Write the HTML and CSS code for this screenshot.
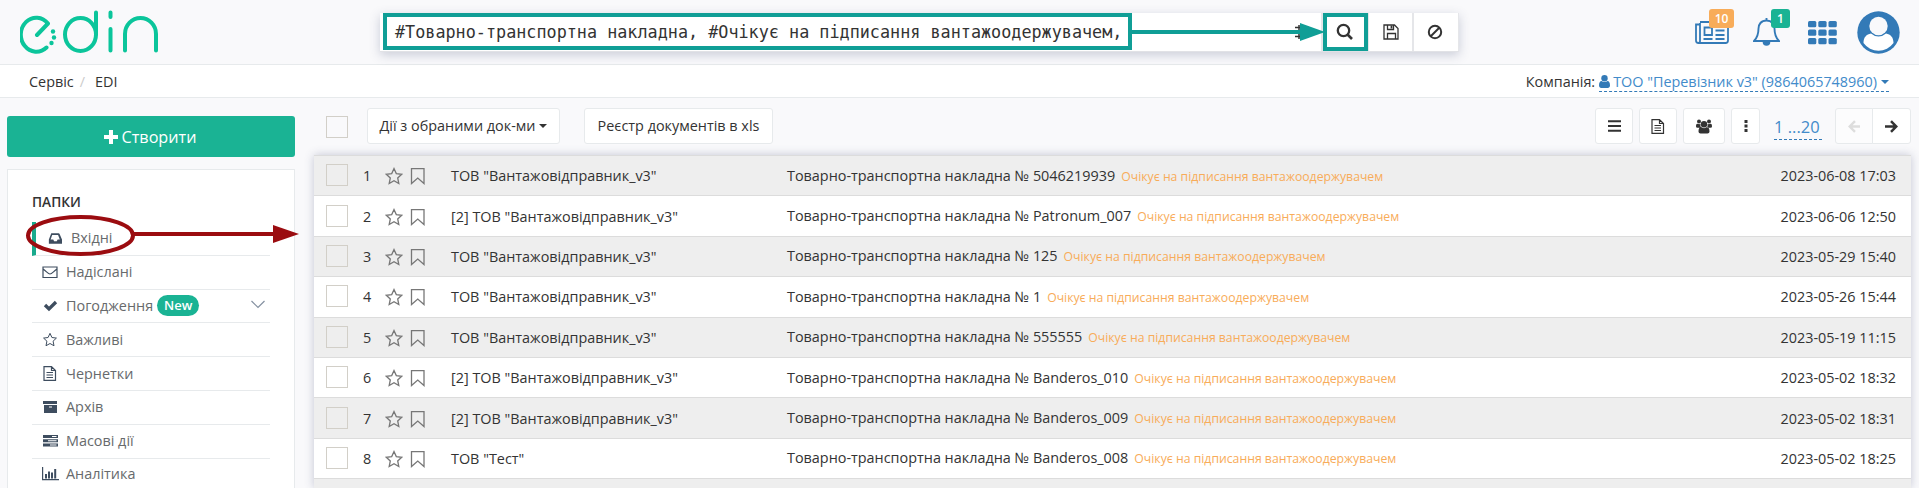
FILE: index.html
```html
<!DOCTYPE html>
<html lang="uk">
<head>
<meta charset="utf-8">
<title>EDIN</title>
<link rel="stylesheet" href="styles.css">
</head>
<body>
<svg class="defs" aria-hidden="true">
  <symbol id="star" viewBox="0 0 18 18"><path d="M9 1.600l2.300 5 5.400.700-4 3.700 1.100 5.500L9 13.800l-4.800 2.700 1.100-5.500-4-3.700 5.400-.7z"/></symbol>
  <symbol id="bookmark" viewBox="0 0 16 18"><path d="M1.500 1.700h12.500v14.800l-6.250-5.500-6.250 5.500z"/></symbol>
  <symbol id="doc" viewBox="0 0 14 15"><path d="M1 .7h7.500L12.500 4.500v9.800H1zM8.500.7v3.800h4M3.500 6.500h6.500M3.500 9h6.500M3.500 11.500h6.500"/></symbol>
</svg>

<header class="header">
  <svg class="logo" width="142" height="46" viewBox="0 0 142 46">
    <path d="M17 27L28 15.500A15.500 17 0 1 0 26.500 39.500"/>
    <ellipse cx="60.500" cy="26.500" rx="15.500" ry="16.500"/>
    <path d="M76 4.500V26M90.500 4.500V9M90.500 21V42.500M105 42.500V26a15.500 16 0 0 1 31 0V42.500"/>
    <g class="logo-dots"><circle cx="33" cy="23.500" r="2.200"/><circle cx="34" cy="29.500" r="2.200"/><circle cx="31.500" cy="35" r="2.200"/></g>
  </svg>
  <div class="search">
    <div class="search-input"><span>#Товарно-транспортна накладна, #Очікує на підписання вантажоодержувачем,</span>
      <svg class="sliders" width="14" height="14" viewBox="0 0 14 14"><path d="M0 2.500h14M0 11.500h14M4 0v5M4 9v5"/></svg>
    </div>
    <div class="search-btn"><svg width="18" height="18" viewBox="0 0 18 18" class="stroke"><circle cx="7.500" cy="7.500" r="5.700" stroke-width="2.300"/><path d="M11.500 11.500l4.500 4.500" stroke-width="2.700"/></svg></div>
    <div class="search-btn"><svg width="16" height="16" viewBox="0 0 16 16" class="stroke"><path d="M1 1h10.500L15 4.500V15H1zM4.500 15V9.500h8V15M4.500 1v4.500h6V1" stroke-width="1.300"/><path d="M8.500 1.500v3" stroke-width="1.800"/></svg></div>
    <div class="search-btn"><svg width="16" height="16" viewBox="0 0 16 16" class="stroke"><circle cx="8" cy="8" r="6.200" stroke-width="2"/><path d="M12.500 3.500l-9 9" stroke-width="2"/></svg></div>
  </div>
  <div class="tools">
    <div class="tool news"><svg width="34" height="24" viewBox="0 0 34 24" class="stroke"><path d="M5 1h28v18.500a2.500 2.500 0 0 1-2.500 2.500H3.500A2.500 2.500 0 0 1 1 19.500V3.500h4M5 2v17.500a2 2 0 0 1-2 2.500M9.500 6.500h7.500v7.500H9.500zM20.500 5.500h9M20.500 9.500h9M20.500 14h9M8.500 18h9M20.500 18h9" stroke-width="1.800"/></svg><span class="badge orange">10</span></div>
    <div class="tool bell"><svg width="27" height="30" viewBox="0 0 27 30" class="stroke"><path d="M13.500 1v2.500M13.500 3.500c-5.500 0-8 4-8 8 0 7-1.500 9.500-4.500 12.500h25c-3-3-4.500-5.500-4.500-12.500 0-4-2.500-8-8-8z" stroke-width="1.900"/><path class="solid" d="M9.700 25h7.600a3.800 3.800 0 0 1-7.600 0z"/></svg><span class="badge green">1</span></div>
    <svg class="grid" width="29" height="24" viewBox="0 0 29 24"><g><rect width="8.300" height="6.300" rx="1.500"/><rect x="10.300" width="8.300" height="6.300" rx="1.500"/><rect x="20.500" width="8.300" height="6.300" rx="1.500"/><rect y="8.500" width="8.300" height="6.300" rx="1.500"/><rect x="10.300" y="8.500" width="8.300" height="6.300" rx="1.500"/><rect x="20.500" y="8.500" width="8.300" height="6.300" rx="1.500"/><rect y="17" width="8.300" height="6.300" rx="1.500"/><rect x="10.300" y="17" width="8.300" height="6.300" rx="1.500"/><rect x="20.500" y="17" width="8.300" height="6.300" rx="1.500"/></g></svg>
    <svg class="avatar" width="43" height="43" viewBox="0 0 43 43"><circle cx="21.500" cy="21.500" r="21.200" fill="#337ab7"/><path d="M6.500 32c0-6 3-8.500 7.500-9.500a11 11 0 0 0 15 0c4.500 1 7.500 3.500 7.500 9.500a18.500 18.500 0 0 1-30 0z" fill="#fff"/><circle cx="21.500" cy="15" r="9.200" fill="#f9f9fb"/></svg>
  </div>
</header>

<nav class="crumbs">
  <div><span>Сервіс</span><span class="slash">/</span><span>EDI</span></div>
  <div class="company"><span>Компанія:</span><a class="dashed"><svg width="11" height="13" viewBox="0 0 11 13"><circle cx="5.500" cy="3.300" r="3.200"/><path d="M0 10.500c0-3 1-4.500 2.500-4.500 1.700 1.400 4.300 1.400 6 0C10 6 11 7.500 11 10.500c0 1.500-1 2.500-2.200 2.500H2.200C1 13 0 12 0 10.500z"/></svg><span>ТОО "Перевізник v3" (9864065748960)</span><i class="caret"></i></a></div>
</nav>

<main class="main">
  <aside class="sidebar">
    <button class="create"><svg width="14" height="14" viewBox="0 0 14 14"><path d="M7 0v14M0 7h14"/></svg>Створити</button>
    <section class="panel">
      <h2>ПАПКИ</h2>
      <ul class="folders">
        <li class="active"><svg width="14" height="13" viewBox="0 0 16 14"><path fill-rule="evenodd" d="M4 1h8q1 0 1.400 1L16 8v5H1V8l2.300-6Q3.500 1 4 1zM4.800 3L3 8h3l1 2h3l1-2h2.500l-2-5z"/></svg>Вхідні</li>
        <li><svg width="16" height="14" viewBox="0 0 16 14" class="stroke"><path d="M1 2h14v10.500H1zM1 4c5 4 5.500 5 7 5s2-1 7-5" stroke-width="1.200"/></svg>Надіслані</li>
        <li><svg width="16" height="14" viewBox="0 0 16 14" class="stroke"><path d="M3 6l4 4 7-7" stroke-width="3.300"/></svg>Погодження<b class="new">New</b><svg class="chevron stroke" width="14" height="9" viewBox="0 0 14 9"><path d="M.5 1L7 7.500 13.500 1"/></svg></li>
        <li><svg width="16" height="15" class="stroke"><use href="#star"/></svg>Важливі</li>
        <li><svg width="16" height="15" class="stroke"><use href="#doc"/></svg>Чернетки</li>
        <li><svg width="16" height="14" viewBox="0 0 16 14"><path fill-rule="evenodd" d="M1 1h14v3H1zM2 5h13v8H2zM7 6.500v1h3v-1z"/></svg>Архів</li>
        <li><svg width="16" height="14" viewBox="0 0 16 14"><path fill-rule="evenodd" d="M1 1h15v3H1zM1 5.300h15v3H1zM1 9.600h15v3H1zM10 2h4.500v1H10zM6 6.300h8.500v1H6zM8 10.600h6.500v1H8z"/></svg>Масові дії</li>
        <li><svg width="17" height="14" viewBox="0 0 17 14" class="stroke"><path d="M.6 0v12.700H17" stroke-width="1.200"/><path d="M4 7v4.500M7 4.500v7M10 5.500v6M13.200 2v9.500" stroke-width="2"/></svg>Аналітика</li>
      </ul>
    </section>
  </aside>

  <section class="content">
    <div class="toolbar">
      <i class="check"></i>
      <button class="btn actions">Дії з обраними док-ми<i class="caret"></i></button>
      <button class="btn registry">Реєстр документів в xls</button>
      <div class="right">
        <button class="btn w38"><svg width="13" height="12" viewBox="0 0 13 12" class="stroke"><path d="M0 1.300h13M0 6h13M0 10.700h13" stroke-width="2"/></svg></button>
        <button class="btn w38"><svg width="14" height="15" class="stroke"><use href="#doc"/></svg></button>
        <button class="btn w42"><svg width="16" height="15" viewBox="0 0 16 15"><circle cx="3" cy="2.500" r="2"/><circle cx="13" cy="2.500" r="2"/><circle cx="8" cy="5.200" r="3.200"/><path d="M0 7.500C0 5 1 4.500 2 5l2.500.3Q4 8 5 8.800H1.500Q0 8.800 0 7.500zM16 7.500C16 5 15 4.500 14 5l-2.500.3q.5 2.700-.5 3.500h3.500q1.500 0 1.500-1.300zM2.500 12.500c0-3 1-4.500 2.500-4.500 2 1.500 4 1.500 6 0 1.500 0 2.500 1.500 2.500 4.500 0 1-1 2-2 2h-7c-1 0-2-1-2-2z"/></svg></button>
        <button class="btn w29"><svg width="4" height="12" viewBox="0 0 4 12"><path d="M.5 0h3v3h-3zM.5 4.500h3v3h-3zM.5 9h3v3h-3z"/></svg></button>
        <a class="dashed pages">1 ...20</a>
        <div class="pager"><button class="btn off"><svg width="13" height="13" viewBox="0 0 13 13" class="stroke"><path d="M12 6.500H2M7 1.200L1.700 6.500 7 11.800" stroke-width="2.400"/></svg></button><button class="btn next"><svg width="13" height="13" viewBox="0 0 13 13" class="stroke"><path d="M0 6.500h11M6 1.200l5.300 5.300L6 11.800" stroke-width="2.500"/></svg></button></div>
      </div>
    </div>
    <div class="table">
      <div class="row"><i class="check"></i><span>1</span><svg><use href="#star"/></svg><svg><use href="#bookmark"/></svg><span>ТОВ "Вантажовідправник_v3"</span><span>Товарно-транспортна накладна № 5046219939<em>Очікує на підписання вантажоодержувачем</em></span><time>2023-06-08 17:03</time></div>
      <div class="row"><i class="check"></i><span>2</span><svg><use href="#star"/></svg><svg><use href="#bookmark"/></svg><span>[2] ТОВ "Вантажовідправник_v3"</span><span>Товарно-транспортна накладна № Patronum_007<em>Очікує на підписання вантажоодержувачем</em></span><time>2023-06-06 12:50</time></div>
      <div class="row"><i class="check"></i><span>3</span><svg><use href="#star"/></svg><svg><use href="#bookmark"/></svg><span>ТОВ "Вантажовідправник_v3"</span><span>Товарно-транспортна накладна № 125<em>Очікує на підписання вантажоодержувачем</em></span><time>2023-05-29 15:40</time></div>
      <div class="row"><i class="check"></i><span>4</span><svg><use href="#star"/></svg><svg><use href="#bookmark"/></svg><span>ТОВ "Вантажовідправник_v3"</span><span>Товарно-транспортна накладна № 1<em>Очікує на підписання вантажоодержувачем</em></span><time>2023-05-26 15:44</time></div>
      <div class="row"><i class="check"></i><span>5</span><svg><use href="#star"/></svg><svg><use href="#bookmark"/></svg><span>ТОВ "Вантажовідправник_v3"</span><span>Товарно-транспортна накладна № 555555<em>Очікує на підписання вантажоодержувачем</em></span><time>2023-05-19 11:15</time></div>
      <div class="row"><i class="check"></i><span>6</span><svg><use href="#star"/></svg><svg><use href="#bookmark"/></svg><span>[2] ТОВ "Вантажовідправник_v3"</span><span>Товарно-транспортна накладна № Banderos_010<em>Очікує на підписання вантажоодержувачем</em></span><time>2023-05-02 18:32</time></div>
      <div class="row"><i class="check"></i><span>7</span><svg><use href="#star"/></svg><svg><use href="#bookmark"/></svg><span>[2] ТОВ "Вантажовідправник_v3"</span><span>Товарно-транспортна накладна № Banderos_009<em>Очікує на підписання вантажоодержувачем</em></span><time>2023-05-02 18:31</time></div>
      <div class="row"><i class="check"></i><span>8</span><svg><use href="#star"/></svg><svg><use href="#bookmark"/></svg><span>ТОВ "Тест"</span><span>Товарно-транспортна накладна № Banderos_008<em>Очікує на підписання вантажоодержувачем</em></span><time>2023-05-02 18:25</time></div>
      <div class="row last"></div>
    </div>
  </section>
</main>

<svg class="annotations" width="1919" height="488" viewBox="0 0 1919 488">
  <g class="teal"><path d="M385 15h745v33H385zM1325 15h41v34h-41zM1132 32h170"/><path class="head" d="M1300 23l25 9-25 9z"/></g>
  <g class="red"><ellipse cx="80.500" cy="235.500" rx="52.500" ry="18.500"/><path d="M133 234h142"/><path class="head" d="M273 225l26 9-26 9z"/></g>
</svg>
</body>
</html>
```
FILE: styles.css
```css
* { box-sizing: border-box; }
body {
  margin: 0;
  height: 488px;
  overflow: hidden;
  position: relative;
  background: #f9f9fb;
  color: #333;
  font: 14.4px/20px "Open Sans", sans-serif;
}
svg { flex: none; fill: currentColor; }
.stroke { fill: none; stroke: currentColor; stroke-width: 1.2; }
.solid { fill: currentColor; stroke: none; }
.defs { position: absolute; width: 0; height: 0; }
button { font: inherit; color: inherit; }

.header {
  height: 65px;
  display: flex;
  border-bottom: 1px solid #e7eaec;
}
.logo { margin: 8px 218px 0 20px; width: 142px; fill: none; stroke: #0bc59b; stroke-width: 4; stroke-linecap: round; stroke-linejoin: round; }
.logo-dots { fill: #0bc59b; stroke: none; }
.search {
  margin-top: 13px;
  width: 1079px;
  height: 39px;
  display: flex;
  gap: 2px;
  background: #e5e6e9;
  border-bottom: 1px solid #e1e2e6;
  box-shadow: 0 3px 10px rgba(60, 70, 110, .25);
}
.search-input {
  width: 941px;
  background: #fff;
  display: flex;
  align-items: center;
  justify-content: space-between;
  padding: 0 12px 0 15px;
  font: 16.8px/20px "DejaVu Sans Mono", monospace;
  white-space: nowrap;
}
.sliders { stroke: #333; stroke-width: 1.5; }
.search-btn { width: 43px; background: #fff; display: flex; align-items: center; justify-content: center; }
.search-btn:nth-child(2) { width: 44px; }
.search-btn:last-child { width: 44px; padding-right: 2px; }
.tools { display: flex; margin-left: 236px; color: #337ab7; }
.tool { position: relative; height: 24px; margin-top: 21px; }
.bell { margin: 17px 0 0 24px; }
.badge {
  position: absolute;
  top: -12px;
  left: 14px;
  width: 25px;
  height: 19px;
  border-radius: 3px;
  color: #fff;
  font: 600 12px/19px "Open Sans", sans-serif;
  text-align: center;
}
.bell .badge { top: -8px; left: 18px; width: 19px; }
.orange { background: #f8ac59; }
.green { background: #1ab394; }
.grid { margin: 21px 20px 0 28px; }
.avatar { margin-top: 11px; }

.crumbs {
  height: 33px;
  background: #fff;
  border-bottom: 1px solid #e7eaec;
  display: flex;
  justify-content: space-between;
  padding: 7px 30px 0 29px;
}
.slash { color: #ccc; margin: 0 10px 0 6px; }
.company { display: flex; gap: 4px; }
.dashed { color: #428bca; border-bottom: 1px dashed #337ab7; }
.company .dashed { height: 20px; display: flex; align-items: center; gap: 3px; }
.company svg { color: #337ab7; }
.caret { display: inline-block; border: 4px solid transparent; border-top-color: currentColor; border-bottom: 0; margin-left: 4px; vertical-align: 3px; }
.company .caret { margin-left: 1px; color: #337ab7; }

.main { display: flex; height: 390px; padding-left: 7px; gap: 18px; }
.sidebar { width: 288px; padding-top: 18px; }
.create {
  width: 288px;
  height: 41px;
  display: flex;
  align-items: center;
  justify-content: center;
  gap: 4px;
  border: 0;
  border-radius: 3px;
  background: #1ab394;
  color: #fff;
  font-size: 16.2px;
  padding: 0 2px 0 0;
}
.create svg { stroke: #fff; stroke-width: 4; }
.panel { margin-top: 12px; height: 319px; background: #fff; border: 1px solid #e7eaec; border-bottom: 0; padding: 21px 24px 0; }
.panel h2 { margin: 0; height: 31px; font-size: 13.7px; line-height: 22px; font-weight: 600; }
.folders { margin: 0; padding: 0; list-style: none; color: #676a6c; }
.folders li { height: 33.8px; display: flex; align-items: center; padding-left: 10px; border-bottom: 1px solid #e7eaec; }
.folders li:last-child { height: 30px; border: 0; }
.folders svg { color: #3e4d5f; margin-right: 8px; }
.folders li:last-child svg { margin-right: 7px; }
.folders .active { border-left: 4px solid #19aa8d; padding-left: 12px; }
.folders .active svg { margin-right: 9px; }
.new { background: #1ab394; color: #fff; height: 21px; border-radius: 11px; padding: 0 7px; margin-left: 4px; font: 600 13px/21px "Open Sans", sans-serif; }
.folders .chevron { margin: -3px 5px 0 auto; color: #8490a0; }

.content { width: 1598px; }
.toolbar { height: 57px; display: flex; padding-top: 10px; }
.check { width: 22px; height: 22px; border: 1px solid #d2cfc8; margin: 8px 19px 0 13px; }
.btn { height: 36px; border: 1px solid #e7eaec; border-radius: 3px; background: #fff; padding: 0; display: flex; align-items: center; justify-content: center; white-space: nowrap; }
.actions { width: 193px; }
.registry { width: 189px; margin-left: 24px; }
.right { display: flex; margin-left: auto; }
.w38 { width: 38px; margin-right: 6px; }
.w42 { width: 42px; margin-right: 6px; }
.w29 { width: 29px; }
.pages { font-size: 16.5px; line-height: 22px; height: 24px; margin: 8px 13px 0 14px; width: 48px; white-space: nowrap; }
.pager { display: flex; }
.pager .btn { width: 38px; border-radius: 3px 0 0 3px; }
.pager .next { width: 39px; margin-left: -1px; border-radius: 0 3px 3px 0; }
.pager .off { color: #ddd; background: #fcfcfd; }

.table { width: 1597px; height: 333px; margin-left: 1px; box-shadow: 0 0 9px rgba(60, 70, 110, .28); }
.row {
  height: 40.4px;
  display: grid;
  grid-template-columns: 49px 22px 24px 42px 336px 1fr auto;
  align-items: center;
  padding: 1px 15px 0 0;
  border-top: 1px solid #dcdcdc;
  background: #fff;
  white-space: nowrap;
}
.row:nth-child(odd) { background: #eee; }
.row.last { height: 9.8px; }
.row .check { margin: -2px 0 0 12px; }
.row svg { width: 18px; height: 18px; fill: none; stroke: #777; stroke-width: 1.3; }
.row em { font-style: normal; font-size: 12.24px; color: #f8ac59; margin-left: 6px; }

.annotations { position: absolute; top: 0; left: 0; fill: none; stroke-width: 4; pointer-events: none; }
.teal { stroke: #109e96; }
.teal .head { fill: #109e96; stroke: none; }
.red { stroke: #9b0c10; }
.red .head { fill: #9b0c10; stroke: none; }
```
